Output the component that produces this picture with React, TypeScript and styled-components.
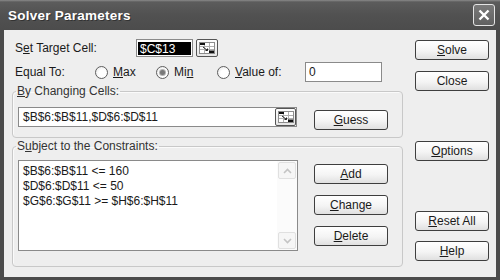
import React from "react";
import styled, { createGlobalStyle } from "styled-components";

const Global = createGlobalStyle`
  html, body { margin: 0; padding: 0; background: #4b4b4b; }
  body { font-family: "Liberation Sans", Arial, sans-serif; font-size: 12px; color: #1a1a1a; }
`;

const Window = styled.div`
  width: 500px;
  height: 280px;
  box-sizing: border-box;
  background: #4b4b4b;
  display: flex;
  flex-direction: column;
  padding: 0 4px 3px 4px;
  overflow: hidden;
`;

const TitleBar = styled.div`
  height: 30px;
  flex: none;
  margin: 0 -4px;
  padding: 0 5px 0 8px;
  display: flex;
  align-items: center;
  justify-content: space-between;
  background: linear-gradient(#8a8a8a 0px, #5c5c5c 2px, #515151 50%, #4c4c4c 100%);
`;

const Title = styled.div`
  color: #fff;
  font: bold 13.5px "Liberation Sans", Arial, sans-serif;
  letter-spacing: 0.25px;
  text-shadow: 1px 1px 0 #333;
`;

const CloseBox = styled.div`
  width: 22px;
  height: 22px;
  box-sizing: border-box;
  border: 1px solid #e4e4e4;
  border-radius: 3px;
  background: linear-gradient(#7a7a7a, #606060);
  display: flex;
  align-items: center;
  justify-content: center;
`;

const Body = styled.div`
  flex: 1;
  background: #eeeeee;
  display: flex;
  padding: 0 7px 0 8px;
`;

const LeftCol = styled.div`
  width: 391px;
  padding-top: 9px;
  display: flex;
  flex-direction: column;
`;

const RightCol = styled.div`
  width: 74px;
  margin-left: 12px;
  display: flex;
  flex-direction: column;
`;

const Row = styled.div<{ $mt?: number; $h: number }>`
  display: flex;
  align-items: center;
  height: ${(p) => p.$h}px;
  margin-top: ${(p) => p.$mt ?? 0}px;
  padding-left: 3px;
`;

const Label = styled.span<{ $w: number }>`
  width: ${(p) => p.$w}px;
  flex: none;
  white-space: nowrap;
`;

const TargetInput = styled.div`
  width: 57px;
  height: 18px;
  box-sizing: border-box;
  border: 1px solid #8a8a8a;
  background: #fff;
  padding: 2px 1px 1px 1px;
  display: flex;
`;

const Selected = styled.span`
  flex: 1;
  background: #000;
  color: #fff;
  line-height: 14px;
  padding-left: 2px;
`;

const RefButton = styled.div<{ $ml?: number; $w: number; $h: number }>`
  width: ${(p) => p.$w}px;
  height: ${(p) => p.$h}px;
  margin-left: ${(p) => p.$ml ?? 0}px;
  box-sizing: border-box;
  border: 1px solid #555;
  border-radius: 2px;
  background: linear-gradient(#fdfdfd, #e6e6e6);
  display: flex;
  align-items: center;
  justify-content: center;
  flex: none;
`;

const RadioOption = styled.label<{ $w: number }>`
  width: ${(p) => p.$w}px;
  flex: none;
  display: flex;
  align-items: center;
  gap: 5px;
  white-space: nowrap;
`;

const RadioCircle = styled.span<{ $on?: boolean }>`
  width: 13px;
  height: 13px;
  box-sizing: border-box;
  border-radius: 50%;
  border: 1px solid #5e5e5e;
  background: radial-gradient(circle at 60% 60%, #ffffff 40%, #e2e2e2 100%);
  display: flex;
  align-items: center;
  justify-content: center;
  &::after {
    content: "";
    display: ${(p) => (p.$on ? "block" : "none")};
    width: 5px;
    height: 5px;
    border-radius: 50%;
    background: #7a7a7a;
    box-shadow: 0 0 0 1px #b4b4b4;
  }
`;

const TextBox = styled.div<{ $w: number; $h: number }>`
  width: ${(p) => p.$w}px;
  height: ${(p) => p.$h}px;
  box-sizing: border-box;
  border: 1px solid #8a8a8a;
  background: #fff;
  display: flex;
  align-items: center;
  padding-left: 3px;
  flex: none;
`;

const Group = styled.fieldset<{ $mt: number; $pt: number; $pb: number }>`
  margin: ${(p) => p.$mt}px 0 0 0;
  padding: ${(p) => p.$pt}px 5px ${(p) => p.$pb}px 5px;
  border: 1px solid #c8c8c8;
  border-radius: 4px;
  min-width: 0;
  box-shadow: inset 1px 1px 0 #fafafa;
`;

const Legend = styled.legend`
  padding: 0 1px;
  margin-left: -2px;
  font-size: 12px;
  line-height: 14px;
  color: #333;
`;

const GroupRow = styled.div`
  display: flex;
  align-items: flex-start;
`;

const RefEdit = styled.div`
  width: 279px;
  height: 20px;
  box-sizing: border-box;
  border: 1px solid #8a8a8a;
  background: #fff;
  display: flex;
  align-items: center;
  justify-content: space-between;
  padding: 0 0 0 4px;
`;

const ListBox = styled.div`
  width: 280px;
  height: 91px;
  box-sizing: border-box;
  border: 1px solid #8a8a8a;
  background: #fff;
  display: flex;
`;

const ListItems = styled.div`
  flex: 1;
  padding: 3px 0 0 4px;
  line-height: 15px;
  white-space: nowrap;
`;

const ScrollBar = styled.div`
  width: 18px;
  display: flex;
  flex-direction: column;
  justify-content: space-between;
  padding: 1px;
  background: #fbfbfb;
`;

const ScrollArrow = styled.div`
  height: 17px;
  box-sizing: border-box;
  border: 1px solid #e0e0e0;
  border-radius: 2px;
  background: #f6f6f6;
  display: flex;
  align-items: center;
  justify-content: center;
`;

const ButtonCol = styled.div`
  margin-left: 16px;
  margin-top: 4px;
  display: flex;
  flex-direction: column;
  gap: 11px;
`;

const Btn = styled.button<{ $mt?: number; $ml?: number }>`
  width: 74px;
  height: 20px;
  margin: ${(p) => p.$mt ?? 0}px 0 0 ${(p) => p.$ml ?? 0}px;
  box-sizing: border-box;
  border: 1px solid #3e3e3e;
  border-radius: 3px;
  background: linear-gradient(#ffffff, #f4f4f4 55%, #e0e0e0);
  font: 12px "Liberation Sans", Arial, sans-serif;
  color: #1a1a1a;
  padding: 0;
  display: flex;
  align-items: center;
  justify-content: center;
  flex: none;
`;

const RefIcon = () => (
  <svg width="16" height="12" viewBox="0 0 16 12">
    <rect x="0.5" y="0.5" width="15" height="11" fill="#fff" stroke="#8c8c8c" />
    <path d="M1 4.5H15M1 7.5H15M5.5 1V11M10.5 1V11" stroke="#b0b0b0" />
    <rect x="1" y="1" width="5" height="2" fill="#111" />
    <rect x="10" y="8.5" width="5" height="2.5" fill="#111" />
    <path d="M4 5L8.5 8.5M8.5 8.5H6.5M8.5 8.5V6.5" stroke="#222" strokeWidth="1" fill="none" />
  </svg>
);

const Chevron = ({ up }: { up?: boolean }) => (
  <svg width="9" height="6" viewBox="0 0 9 6">
    <path d={up ? "M1 5L4.5 1.5L8 5" : "M1 1L4.5 4.5L8 1"} stroke="#c4c4c4" strokeWidth="1.6" fill="none" />
  </svg>
);

export default function App() {
  return (
    <>
      <Global />
      <Window>
        <TitleBar>
          <Title>Solver Parameters</Title>
          <CloseBox>
            <svg width="12" height="12" viewBox="0 0 12 12">
              <path d="M1.5 1.5L10.5 10.5M10.5 1.5L1.5 10.5" stroke="#fff" strokeWidth="2.4" />
            </svg>
          </CloseBox>
        </TitleBar>
        <Body>
          <LeftCol>
            <Row $h={18}>
              <Label $w={121}>
                S<u>e</u>t Target Cell:
              </Label>
              <TargetInput>
                <Selected>$C$13</Selected>
              </TargetInput>
              <RefButton $ml={3} $w={22} $h={18}>
                <RefIcon />
              </RefButton>
            </Row>
            <Row $h={20} $mt={5}>
              <Label $w={80}>Equal To:</Label>
              <RadioOption $w={61}>
                <RadioCircle />
                <span>
                  <u>M</u>ax
                </span>
              </RadioOption>
              <RadioOption $w={61}>
                <RadioCircle $on />
                <span>
                  Mi<u>n</u>
                </span>
              </RadioOption>
              <RadioOption $w={88}>
                <RadioCircle />
                <span>
                  <u>V</u>alue of:
                </span>
              </RadioOption>
              <TextBox $w={77} $h={20}>0</TextBox>
            </Row>
            <Group $mt={2} $pt={9} $pb={7}>
              <Legend>
                <u>B</u>y Changing Cells:
              </Legend>
              <GroupRow>
                <RefEdit>
                  <span>$B$6:$B$11,$D$6:$D$11</span>
                  <RefButton $w={21} $h={18}>
                    <RefIcon />
                  </RefButton>
                </RefEdit>
                <Btn $ml={17} $mt={3}>
                  <span>
                    <u>G</u>uess
                  </span>
                </Btn>
              </GroupRow>
            </Group>
            <Group $mt={1} $pt={7} $pb={15}>
              <Legend>
                S<u>u</u>bject to the Constraints:
              </Legend>
              <GroupRow>
                <ListBox>
                  <ListItems>
                    <div>$B$6:$B$11 &lt;= 160</div>
                    <div>$D$6:$D$11 &lt;= 50</div>
                    <div>$G$6:$G$11 &gt;= $H$6:$H$11</div>
                  </ListItems>
                  <ScrollBar>
                    <ScrollArrow>
                      <Chevron up />
                    </ScrollArrow>
                    <ScrollArrow>
                      <Chevron />
                    </ScrollArrow>
                  </ScrollBar>
                </ListBox>
                <ButtonCol>
                  <Btn>
                    <span>
                      <u>A</u>dd
                    </span>
                  </Btn>
                  <Btn>
                    <span>
                      <u>C</u>hange
                    </span>
                  </Btn>
                  <Btn>
                    <span>
                      <u>D</u>elete
                    </span>
                  </Btn>
                </ButtonCol>
              </GroupRow>
            </Group>
          </LeftCol>
          <RightCol>
            <Btn $mt={10}>
              <span>
                <u>S</u>olve
              </span>
            </Btn>
            <Btn $mt={11}>Close</Btn>
            <Btn $mt={50}>
              <span>
                <u>O</u>ptions
              </span>
            </Btn>
            <Btn $mt={50}>
              <span>
                <u>R</u>eset All
              </span>
            </Btn>
            <Btn $mt={10}>
              <span>
                <u>H</u>elp
              </span>
            </Btn>
          </RightCol>
        </Body>
      </Window>
    </>
  );
}
